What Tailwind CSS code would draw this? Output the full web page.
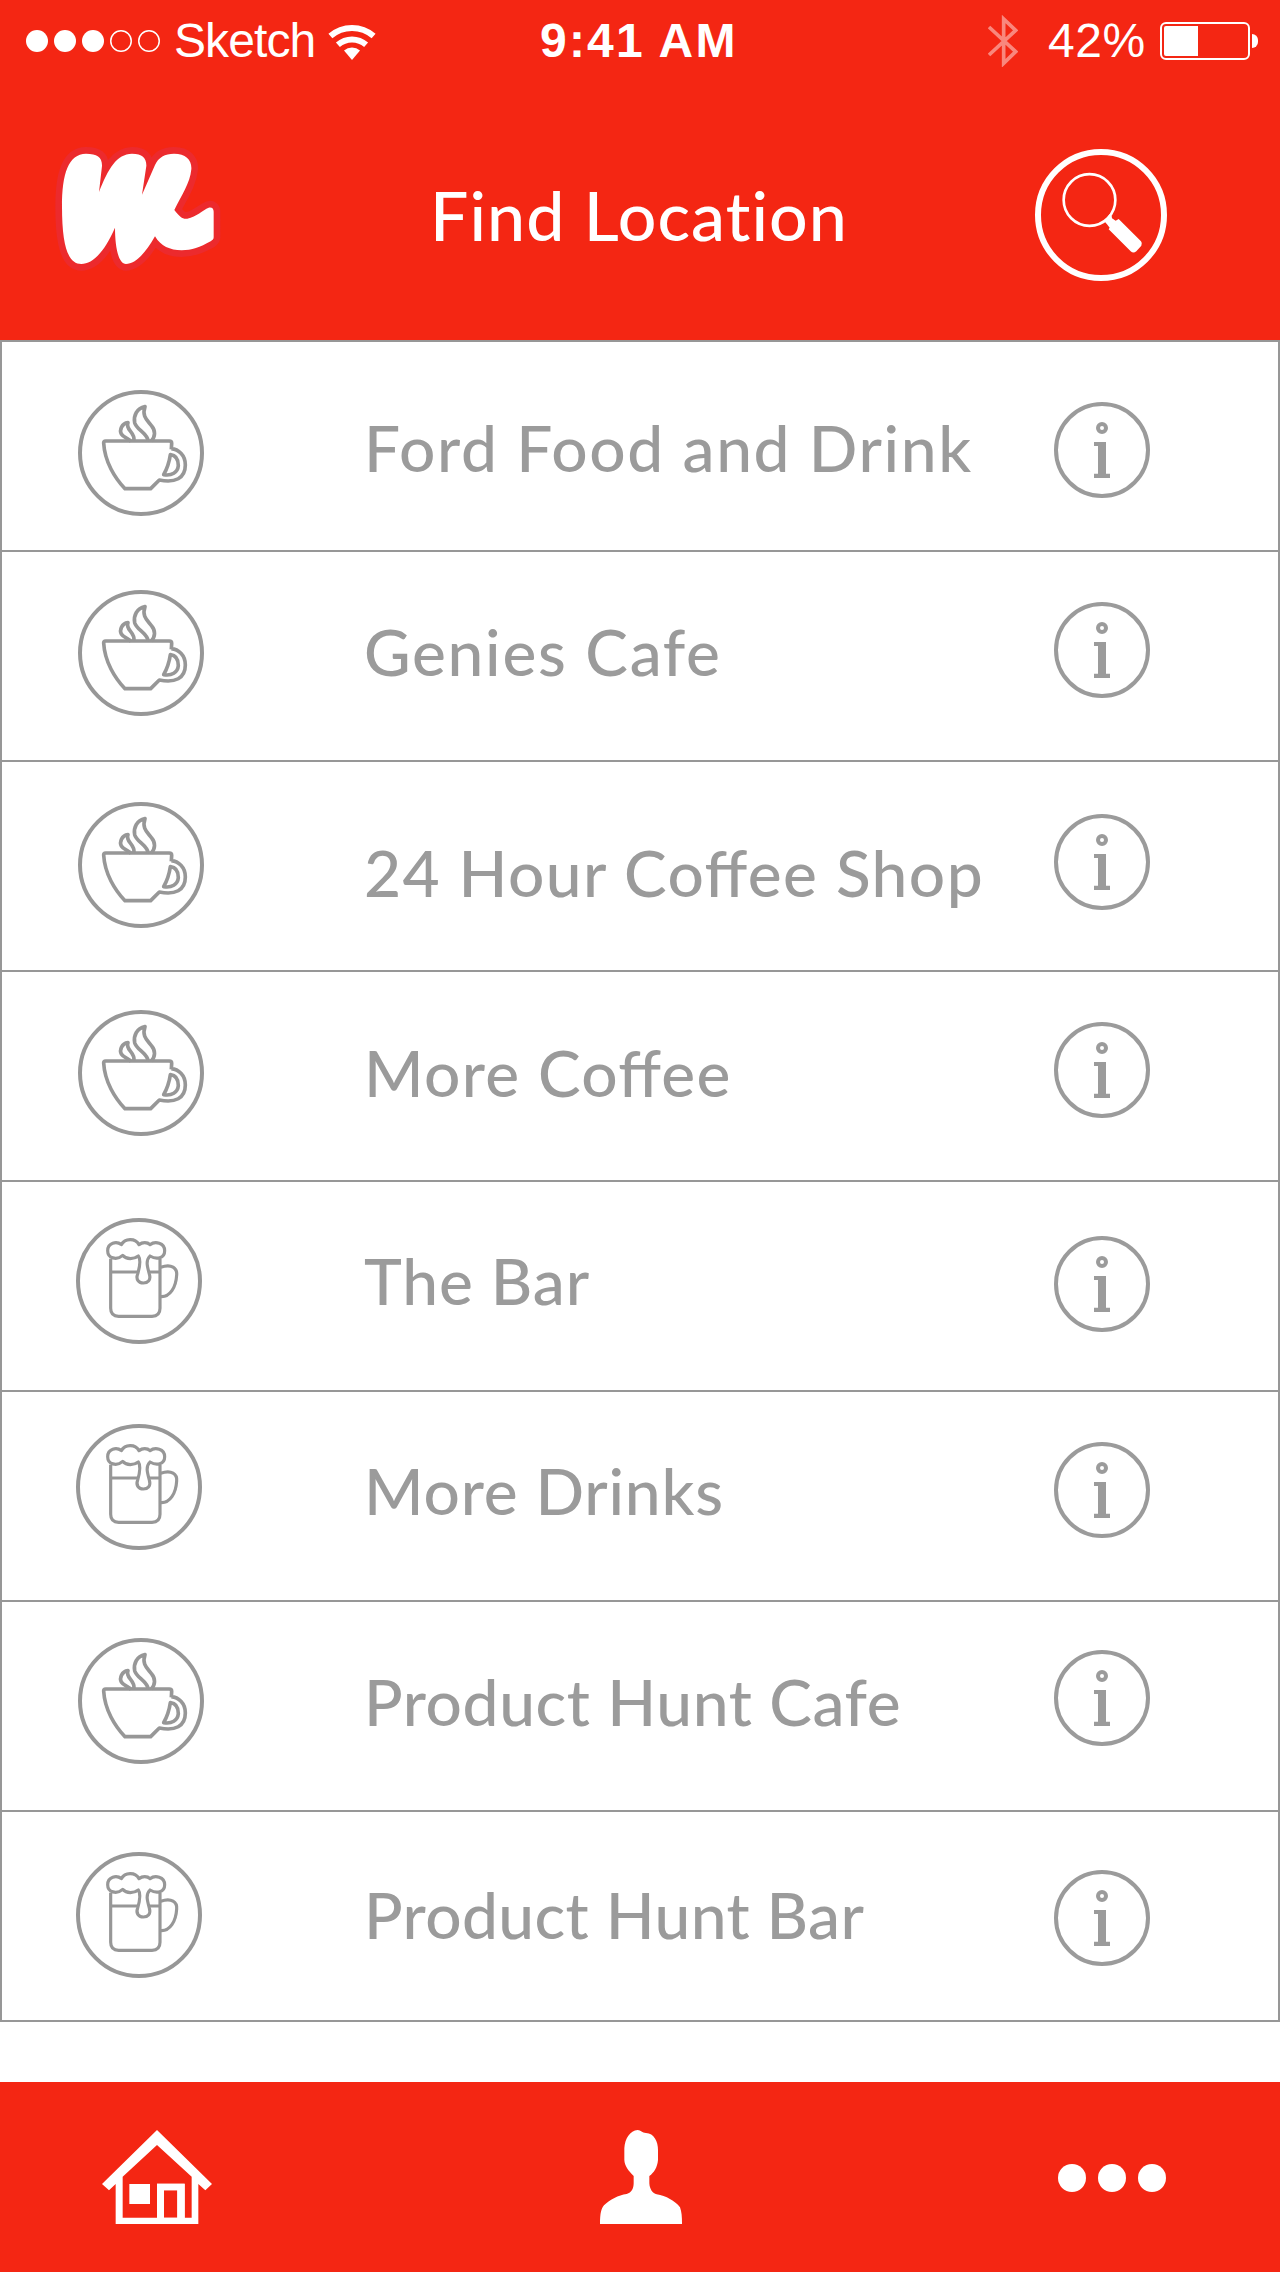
<!DOCTYPE html>

<html lang="en">
<head>
    <meta charset="utf-8" />
    <meta name="viewport" content="width=device-width, initial-scale=1.0">
    <script src="https://cdn.jsdelivr.net/npm/@tailwindcss/browser@4"></script>
    <title>Find Location</title>
</head>
<body class="bg-white">
    <!-- Shared icons -->
    <svg class="hidden">
        <symbol id="coffee" viewBox="54 60 378 378">
            <g fill="none" stroke="#979797" stroke-width="11" stroke-linejoin="round">
                <circle cx="243" cy="249" r="183" stroke-width="12" />
                <path d="M334 238 L335 220 Q335 213 328 213 H137 Q131 213 131 219 C134 275 165 325 195 356 H272 L298 330 C345 340 376 325 376 285 C376 255 355 238 334 236" />
                <path d="M331 254 C350 256 355 270 355 287 C353 308 335 318 311 314 C321 296 328 275 331 254 Z" />
                <path d="M265 214 C262 188 230 180 224 158 C220 138 230 115 255 110 C245 140 262 150 275 168 C287 182 286 200 274 213" />
                <path d="M213 214 C205 206 190 202 184 192 C178 180 185 160 204 158 C195 180 225 185 222 212" />
            </g>
        </symbol>
        <symbol id="beer" viewBox="48 54 378 378">
            <g fill="none" stroke="#979797" stroke-width="9.5" stroke-linejoin="round">
                <circle cx="237" cy="243" r="183" stroke-width="12" />
                <path d="M152 176 V325 Q152 349 176 349 H276 Q300 349 300 325 V176 M152 216 H232 M266 216 H300" />
                <path d="M302 202 C335 190 352 205 350 225 C348 262 330 292 302 290" />
                <path d="M188 166 C170 182 143 175 143 152 C143 128 170 122 184 134 C195 115 225 113 237 134 C247 126 262 126 270 134 C285 122 314 128 314 152 C314 175 290 180 270 168 C256 182 262 200 268 222 C274 242 262 249 250 249 C238 249 226 240 233 222 C238 205 244 180 235 168 C222 178 200 180 188 166 Z" />
            </g>
        </symbol>
        <symbol id="info" viewBox="42 36 288 288">
            <circle cx="186" cy="180" r="138" fill="none" stroke="#9b9b9b" stroke-width="12" />
            <circle cx="186" cy="114" r="12" fill="none" stroke="#9b9b9b" stroke-width="12" />
            <path d="M162 156 H198 V251 H210 V264 H162 V251 H174 V168 H162 Z" fill="#9b9b9b" />
        </symbol>
    </svg>

    <!-- Page Head -->
    <header class="h-[340px] bg-[#f42613] text-white">
        <!-- Status bar -->
        <div class="flex h-[82px] items-center font-['Liberation_Sans',sans-serif] text-[48px] leading-[56px]">
            <svg class="ml-[26px] h-[22px] w-[134px] shrink-0" viewBox="0 0 134 22" fill="#fff">
                <circle cx="11" cy="11" r="11" />
                <circle cx="39" cy="11" r="11" />
                <circle cx="67" cy="11" r="11" />
                <circle cx="95" cy="11" r="10.250" fill="none" stroke="#fff" stroke-width="1.500" />
                <circle cx="123" cy="11" r="10.250" fill="none" stroke="#fff" stroke-width="1.500" />
            </svg>
            <span class="ml-[14px] w-[154px] tracking-[-0.9px]">Sketch</span>
            <svg class="h-[38px] w-[48px] shrink-0" viewBox="0 0 48 38" fill="none" stroke="#fff" stroke-width="6">
                <path d="M2.400 14.100 A33 33 0 0 1 45.600 14.100" />
                <path d="M9.900 22.800 A21.500 21.500 0 0 1 38.100 22.800" />
                <path d="M24 38 L16 28.500 A12.500 12.500 0 0 1 32 28.500 Z" fill="#fff" stroke="none" />
            </svg>
            <span class="ml-[164px] w-[448px] font-bold tracking-[2.2px]">9:41 AM</span>
            <svg class="h-[52px] w-[30px] shrink-0" viewBox="24 12 90 156" fill="none" stroke="#fff" stroke-opacity=".45" stroke-width="11">
                <path d="M27 48 L107 122 L71 157 V24 L107 58 L27 132" />
            </svg>
            <span class="ml-[30px] w-[112px] tracking-[0.6px]">42%</span>
            <div class="flex h-[38px] w-[90px] shrink-0 rounded-[6px] border-2 border-white p-[2px]">
                <div class="w-[34px] rounded-l-[2px] bg-white"></div>
            </div>
            <div class="ml-[2px] h-[14px] w-[6px] rounded-r-full bg-white"></div>
        </div>

        <!-- Logo, title & search -->
        <div class="flex items-start pl-[40px] pt-[48px]">
            <svg class="h-[150px] w-[200px] shrink-0" viewBox="0 0 600 450">
                <path d="M66 230 C66 130 85 72 138 71 C172 71 187 82 186 108 L177 186 C205 115 230 72 276 71 C308 71 320 85 319 108 L306 194 L345 105 C355 82 375 71 402 71 C438 71 456 90 454 118 C450 160 425 195 403 240 C420 262 428 268 442 266 C470 260 488 240 506 233 C516 231 521 236 521 245 L521 322 C521 328 518 330 512 334 C480 352 455 361 425 361 C390 361 362 348 345 319 C315 372 285 402 258 402 C235 402 225 350 225 293 C195 362 160 402 124 402 C85 402 66 350 66 230 Z" fill="#fff" stroke="#ec2a2d" stroke-width="40" stroke-linejoin="round" paint-order="stroke" />
            </svg>
            <h1 class="ml-[190px] mt-[45px] w-[605px] whitespace-nowrap font-['Lato',sans-serif] text-[68px] font-medium leading-[80px] tracking-[1.1px]">Find Location</h1>
            <svg class="mt-[19px] h-[132px] w-[132px] shrink-0" viewBox="165 417 396 396">
                <circle cx="363" cy="615" r="189" fill="none" stroke="#fff" stroke-width="18" />
                <circle cx="328.500" cy="570" r="77.500" fill="none" stroke="#fff" stroke-width="8" />
                <path d="M389 612 L395 618 L396 625 L407 632 L416 627 L483 694 Q488 700 484 707 L469 724 Q460 731 452 724 L386 658 L389 653 L381 643 L373 634 Z" fill="#fff" />
            </svg>
        </div>
    </header>
    <!-- End of Page Head -->

    <!-- Locations -->
    <ul class="border-x-2 border-t-2 border-[#979797] font-['Lato',sans-serif] text-[64px] font-medium leading-[80px] text-[#9b9b9b]">
        <li class="flex h-[210px] items-start border-b-2 border-[#979797] pl-[76px]">
            <svg class="mt-[48px] h-[126px] w-[126px] shrink-0"><use href="#coffee" /></svg>
            <span class="ml-[160px] mt-[66px] w-[690px] whitespace-nowrap tracking-[1.6px]">Ford Food and Drink</span>
            <svg class="mt-[60px] h-[96px] w-[96px] shrink-0"><use href="#info" /></svg>
        </li>
        <li class="flex h-[210px] items-start border-b-2 border-[#979797] pl-[76px]">
            <svg class="mt-[38px] h-[126px] w-[126px] shrink-0"><use href="#coffee" /></svg>
            <span class="ml-[160px] mt-[60px] w-[690px] whitespace-nowrap tracking-[1.7px]">Genies Cafe</span>
            <svg class="mt-[50px] h-[96px] w-[96px] shrink-0"><use href="#info" /></svg>
        </li>
        <li class="flex h-[210px] items-start border-b-2 border-[#979797] pl-[76px]">
            <svg class="mt-[40px] h-[126px] w-[126px] shrink-0"><use href="#coffee" /></svg>
            <span class="ml-[160px] mt-[71px] w-[690px] whitespace-nowrap tracking-[1.4px] [font-feature-settings:'liga'_1]">24 Hour Coffee Shop</span>
            <svg class="mt-[52px] h-[96px] w-[96px] shrink-0"><use href="#info" /></svg>
        </li>
        <li class="flex h-[210px] items-start border-b-2 border-[#979797] pl-[76px]">
            <svg class="mt-[38px] h-[126px] w-[126px] shrink-0"><use href="#coffee" /></svg>
            <span class="ml-[160px] mt-[61px] w-[690px] whitespace-nowrap tracking-[1.3px] [font-feature-settings:'liga'_1]">More Coffee</span>
            <svg class="mt-[50px] h-[96px] w-[96px] shrink-0"><use href="#info" /></svg>
        </li>
        <li class="flex h-[210px] items-start border-b-2 border-[#979797] pl-[74px]">
            <svg class="mt-[36px] h-[126px] w-[126px] shrink-0"><use href="#beer" /></svg>
            <span class="ml-[162px] mt-[59px] w-[690px] whitespace-nowrap tracking-[0.9px]">The Bar</span>
            <svg class="mt-[54px] h-[96px] w-[96px] shrink-0"><use href="#info" /></svg>
        </li>
        <li class="flex h-[210px] items-start border-b-2 border-[#979797] pl-[74px]">
            <svg class="mt-[32px] h-[126px] w-[126px] shrink-0"><use href="#beer" /></svg>
            <span class="ml-[162px] mt-[59px] w-[690px] whitespace-nowrap tracking-[0.8px]">More Drinks</span>
            <svg class="mt-[50px] h-[96px] w-[96px] shrink-0"><use href="#info" /></svg>
        </li>
        <li class="flex h-[210px] items-start border-b-2 border-[#979797] pl-[76px]">
            <svg class="mt-[36px] h-[126px] w-[126px] shrink-0"><use href="#coffee" /></svg>
            <span class="ml-[160px] mt-[60px] w-[690px] whitespace-nowrap tracking-[0.6px]">Product Hunt Cafe</span>
            <svg class="mt-[48px] h-[96px] w-[96px] shrink-0"><use href="#info" /></svg>
        </li>
        <li class="flex h-[210px] items-start border-b-2 border-[#979797] pl-[74px]">
            <svg class="mt-[40px] h-[126px] w-[126px] shrink-0"><use href="#beer" /></svg>
            <span class="ml-[162px] mt-[63px] w-[690px] whitespace-nowrap tracking-[0.4px]">Product Hunt Bar</span>
            <svg class="mt-[58px] h-[96px] w-[96px] shrink-0"><use href="#info" /></svg>
        </li>
    </ul>
    <!-- End of Locations -->

    <!-- Tab bar -->
    <nav class="mt-[60px] flex h-[190px] items-start bg-[#f42613] pl-[102px] pt-[48px]">
        <svg class="h-[94px] w-[110px]" viewBox="66 180 330 282" fill="#fff">
            <path fill-rule="evenodd" d="M231 180 L396 342 L376 361 L355 342 V462 H107 V342 L87 361 L66 342 Z M231 225 L335 320 V443 H314 V341 H231 V443 H128 V320 Z M252 361 H292 V443 H252 Z" />
            <path d="M252 341 H314 V462 H231 V341 Z M252 361 V443 H292 V361 Z" fill-rule="evenodd" />
            <path d="M148 342 H210 V402 H148 Z" />
        </svg>
        <svg class="ml-[388px] h-[94px] w-[82px]" viewBox="60 180 246 282" fill="#fff">
            <path d="M60 462 C60 430 64 415 72 406 C90 388 115 376 140 372 C155 368 161 355 161 340 L161 318 C145 302 134 288 133 270 L133 235 C135 205 150 182 173 180 C183 181 186 188 198 189 C222 190 234 215 234 240 L234 270 C232 292 222 308 208 318 L208 340 C209 358 218 370 230 373 C258 378 285 392 300 412 C305 425 306 440 306 462 Z" />
        </svg>
        <div class="ml-[376px] mt-[34px] flex gap-[12px]">
            <div class="size-[28px] rounded-full bg-white"></div>
            <div class="size-[28px] rounded-full bg-white"></div>
            <div class="size-[28px] rounded-full bg-white"></div>
        </div>
    </nav>
</body>

</html>
